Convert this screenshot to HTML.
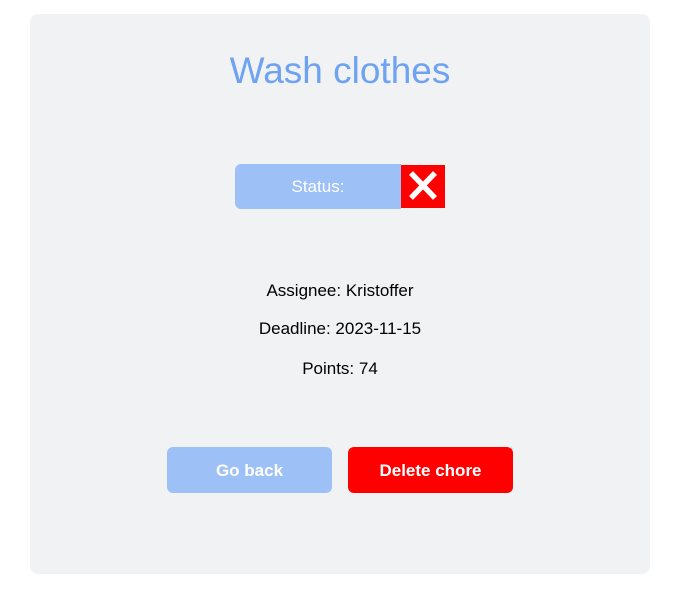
<!DOCTYPE html>
<html><head><style>
body{margin:0;width:680px;height:593px;background:#fff;font-family:"Liberation Sans","DejaVu Sans",sans-serif;position:relative}
.card{position:absolute;left:30px;top:14px;width:620px;height:560px;background:#f1f2f4;border-radius:8px}
h1{position:absolute;left:0;width:680px;top:49px;margin:0;text-align:center;font-weight:normal;font-size:37px;color:#6ea2f2;line-height:44px}
.status{position:absolute;left:235px;top:164px;width:166px;height:45px;background:#9dc0f7;border-radius:6px 0 0 6px;color:#fff;font-size:17px;line-height:45px;text-align:center}
.x{position:absolute;left:401px;top:165px;width:44px;height:43px;background:#ff0000}
.t{position:absolute;left:0;width:680px;text-align:center;font-size:17px;color:#000}
.btn{position:absolute;top:447px;width:165px;height:46px;border-radius:6px;color:#fff;font-weight:bold;font-size:17px;line-height:47px;text-align:center}
</style></head><body>
<div class="card"></div>
<h1>Wash clothes</h1>
<div class="status">Status:</div>
<div class="x"><svg width="44" height="43" viewBox="0 0 44 43"><path d="M10 8L34 33M34 8L10 33" stroke="#fff" stroke-width="5.5"/></svg></div>
<div class="t" style="top:281px">Assignee: Kristoffer</div>
<div class="t" style="top:319px">Deadline: 2023-11-15</div>
<div class="t" style="top:359px">Points: 74</div>
<div class="btn" style="left:167px;background:#9dc0f7">Go back</div>
<div class="btn" style="left:348px;background:#ff0000">Delete chore</div>
</body></html>
